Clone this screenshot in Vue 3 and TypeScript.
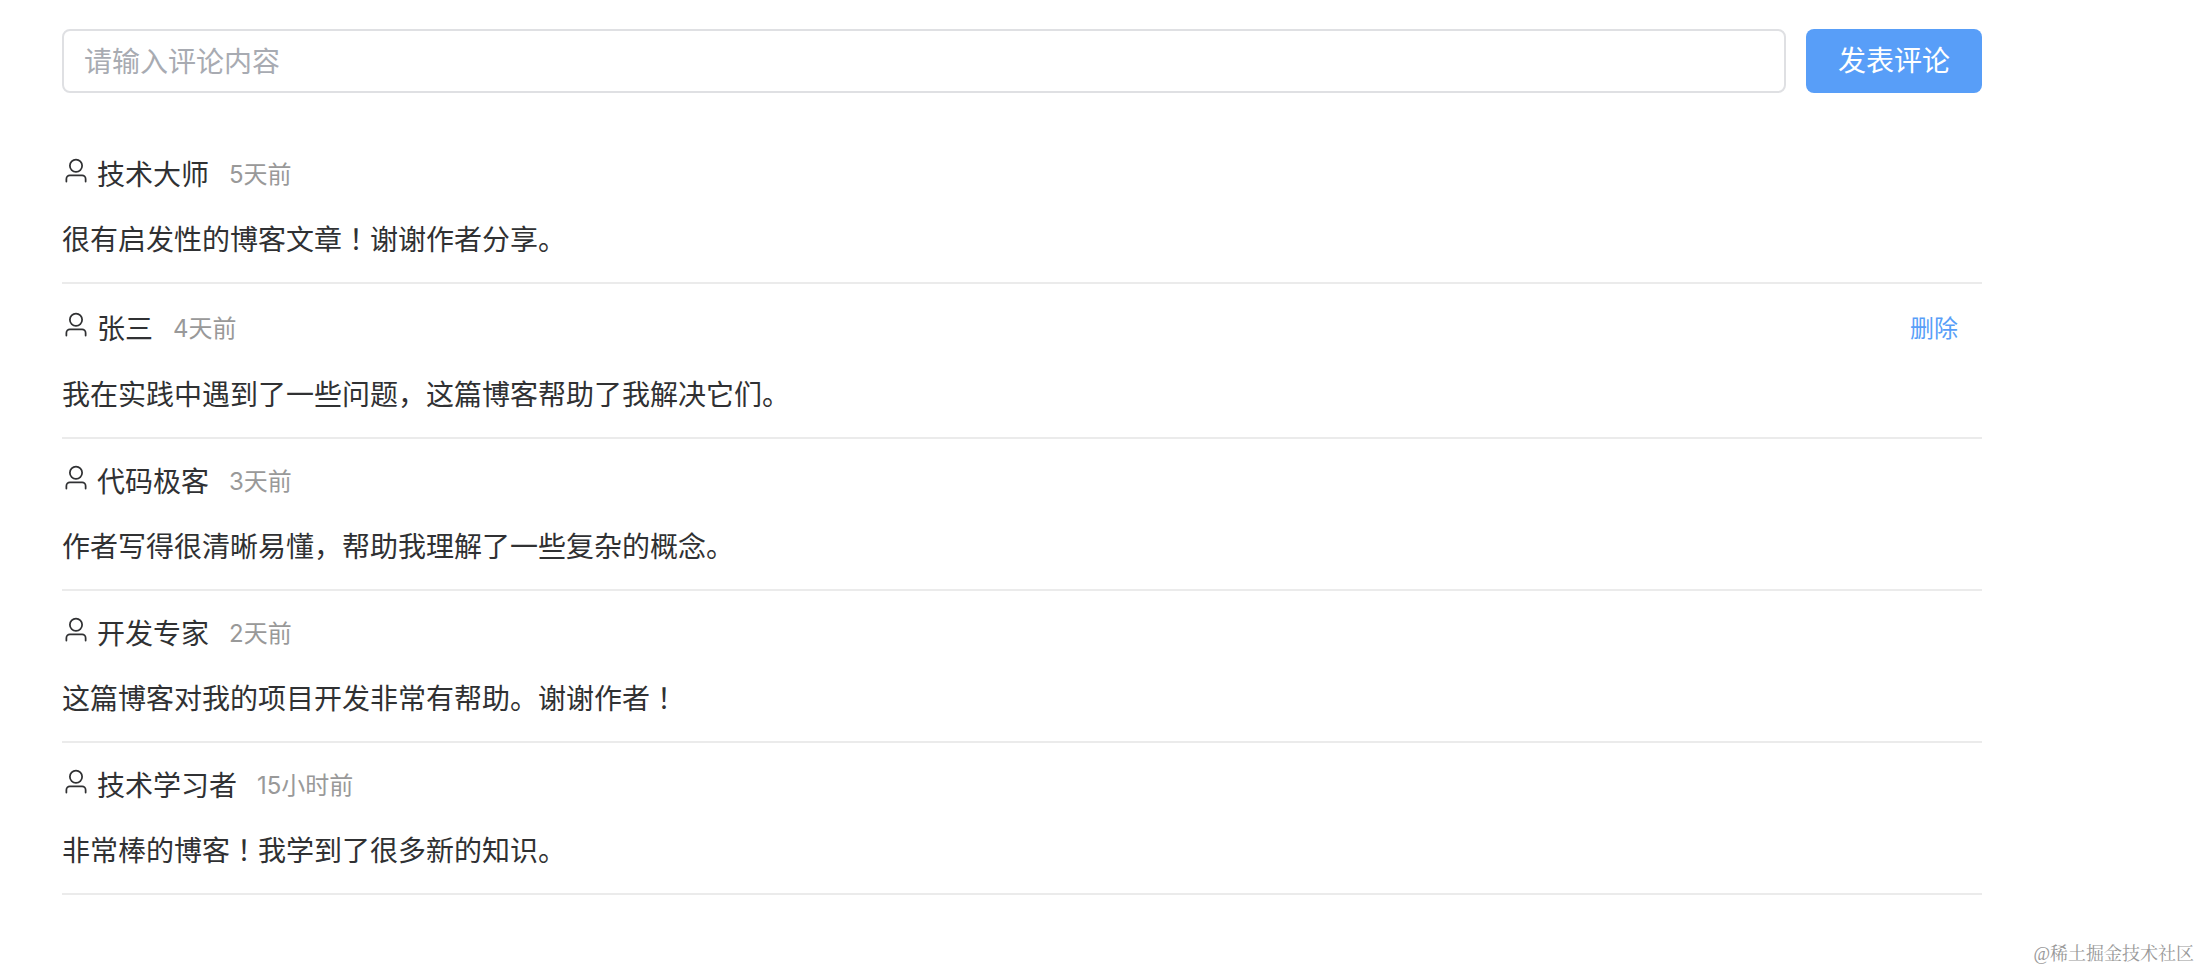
<script setup lang="ts">
import { ref } from 'vue'

interface Comment {
  id: number
  author: string
  time: string
  content: string
  own?: boolean
}

const draft = ref('')

const comments = ref<Comment[]>([
  { id: 1, author: '技术大师', time: '5天前', content: '很有启发性的博客文章！谢谢作者分享。' },
  { id: 2, author: '张三', time: '4天前', content: '我在实践中遇到了一些问题，这篇博客帮助了我解决它们。', own: true },
  { id: 3, author: '代码极客', time: '3天前', content: '作者写得很清晰易懂，帮助我理解了一些复杂的概念。' },
  { id: 4, author: '开发专家', time: '2天前', content: '这篇博客对我的项目开发非常有帮助。谢谢作者！' },
  { id: 5, author: '技术学习者', time: '15小时前', content: '非常棒的博客！我学到了很多新的知识。' },
])

// Exclamation marks are set in a face that centres them in their cell.
function segments(text: string): string[] {
  return text.split(/(！)/).filter((part) => part !== '')
}

function publish(): void {
  const content = draft.value.trim()
  if (!content) return
  comments.value.push({ id: Date.now(), author: '张三', time: '刚刚', content, own: true })
  draft.value = ''
}

function remove(id: number): void {
  comments.value = comments.value.filter((comment) => comment.id !== id)
}
</script>

<template>
  <main class="page">
    <form class="composer" @submit.prevent="publish">
      <input v-model="draft" class="composer-input" type="text" placeholder="请输入评论内容" aria-label="请输入评论内容" />
      <button class="composer-submit" type="submit">发表评论</button>
    </form>

    <ul class="list">
      <li v-for="comment in comments" :key="comment.id" class="comment">
        <div class="head">
          <svg class="avatar" viewBox="0 0 1024 1024" aria-hidden="true">
            <path
              fill="currentColor"
              d="M512 512a192 192 0 1 0 0-384 192 192 0 0 0 0 384zm0 64a256 256 0 1 1 0-512 256 256 0 0 1 0 512zm320 320v-96a96 96 0 0 0-96-96H288a96 96 0 0 0-96 96v96a32 32 0 1 1-64 0v-96a160 160 0 0 1 160-160h448a160 160 0 0 1 160 160v96a32 32 0 1 1-64 0z"
            />
          </svg>
          <div class="meta">
            <span class="author">{{ comment.author }}</span>
            <span class="time">{{ comment.time }}</span>
          </div>
          <button v-if="comment.own" class="remove" type="button" @click="remove(comment.id)">删除</button>
        </div>
        <p class="content"><span v-for="(part, i) in segments(comment.content)" :key="i" :class="{ mark: part === '！' }">{{ part }}</span></p>
      </li>
    </ul>

    <div class="watermark">@稀土掘金技术社区</div>
  </main>
</template>

<style>
body {
  margin: 0;
  background: #fff;
}
</style>

<style scoped>
.page {
  position: relative;
  box-sizing: border-box;
  min-height: 100vh;
  padding: 29px 218px 40px 62px;
  font-family: "Noto Sans CJK SC", sans-serif;
  font-size: 28px;
  font-weight: 400;
  color: #303133;
}

.composer {
  display: flex;
  gap: 20px;
}

.composer-input {
  flex: 1;
  min-width: 0;
  box-sizing: border-box;
  height: 64px;
  padding: 0 20px 2px;
  border: 2px solid #dfe0e3;
  border-radius: 8px;
  outline: none;
  background: #fff;
  color: inherit;
  font: inherit;
}

.composer-input::placeholder {
  color: #a8abb2;
  opacity: 1;
}

.composer-submit {
  height: 64px;
  padding: 0 32px 4px;
  border: 0;
  border-radius: 8px;
  background: #589ef8;
  color: #fff;
  font: inherit;
  cursor: pointer;
}

.list {
  margin: 39px 0 0;
  padding: 0;
  list-style: none;
}

.comment {
  padding: 24px 0 22px;
  border-bottom: 2px solid #ebebeb;
}

.head {
  display: flex;
  align-items: center;
  min-height: 38px;
}

.avatar {
  width: 28px;
  height: 28px;
  margin: 0 7px 8px 0;
}

.meta {
  display: flex;
  flex: 1;
  align-items: center;
  gap: 20px;
  padding-bottom: 4px;
  line-height: 34px;
}

.time {
  padding-top: 4px;
  font-family: Inter, "Noto Sans CJK SC", sans-serif;
  font-size: 24px;
  line-height: 30px;
  color: #999;
}

.remove {
  height: 41px;
  padding: 0 24px 4px;
  border: 0;
  background: transparent;
  color: #589ef8;
  font: inherit;
  font-size: 24px;
  cursor: pointer;
}

.content {
  margin: 24px 0 0;
  padding-bottom: 2px;
  line-height: 40px;
}

.mark {
  font-family: "Noto Sans CJK JP", sans-serif;
  line-height: 1;
}

.watermark {
  position: absolute;
  right: 6px;
  bottom: 3px;
  font-family: "Liberation Serif", "Noto Serif CJK SC", "Noto Sans CJK SC", serif;
  font-size: 18px;
  line-height: 26px;
  color: #999;
}
</style>
